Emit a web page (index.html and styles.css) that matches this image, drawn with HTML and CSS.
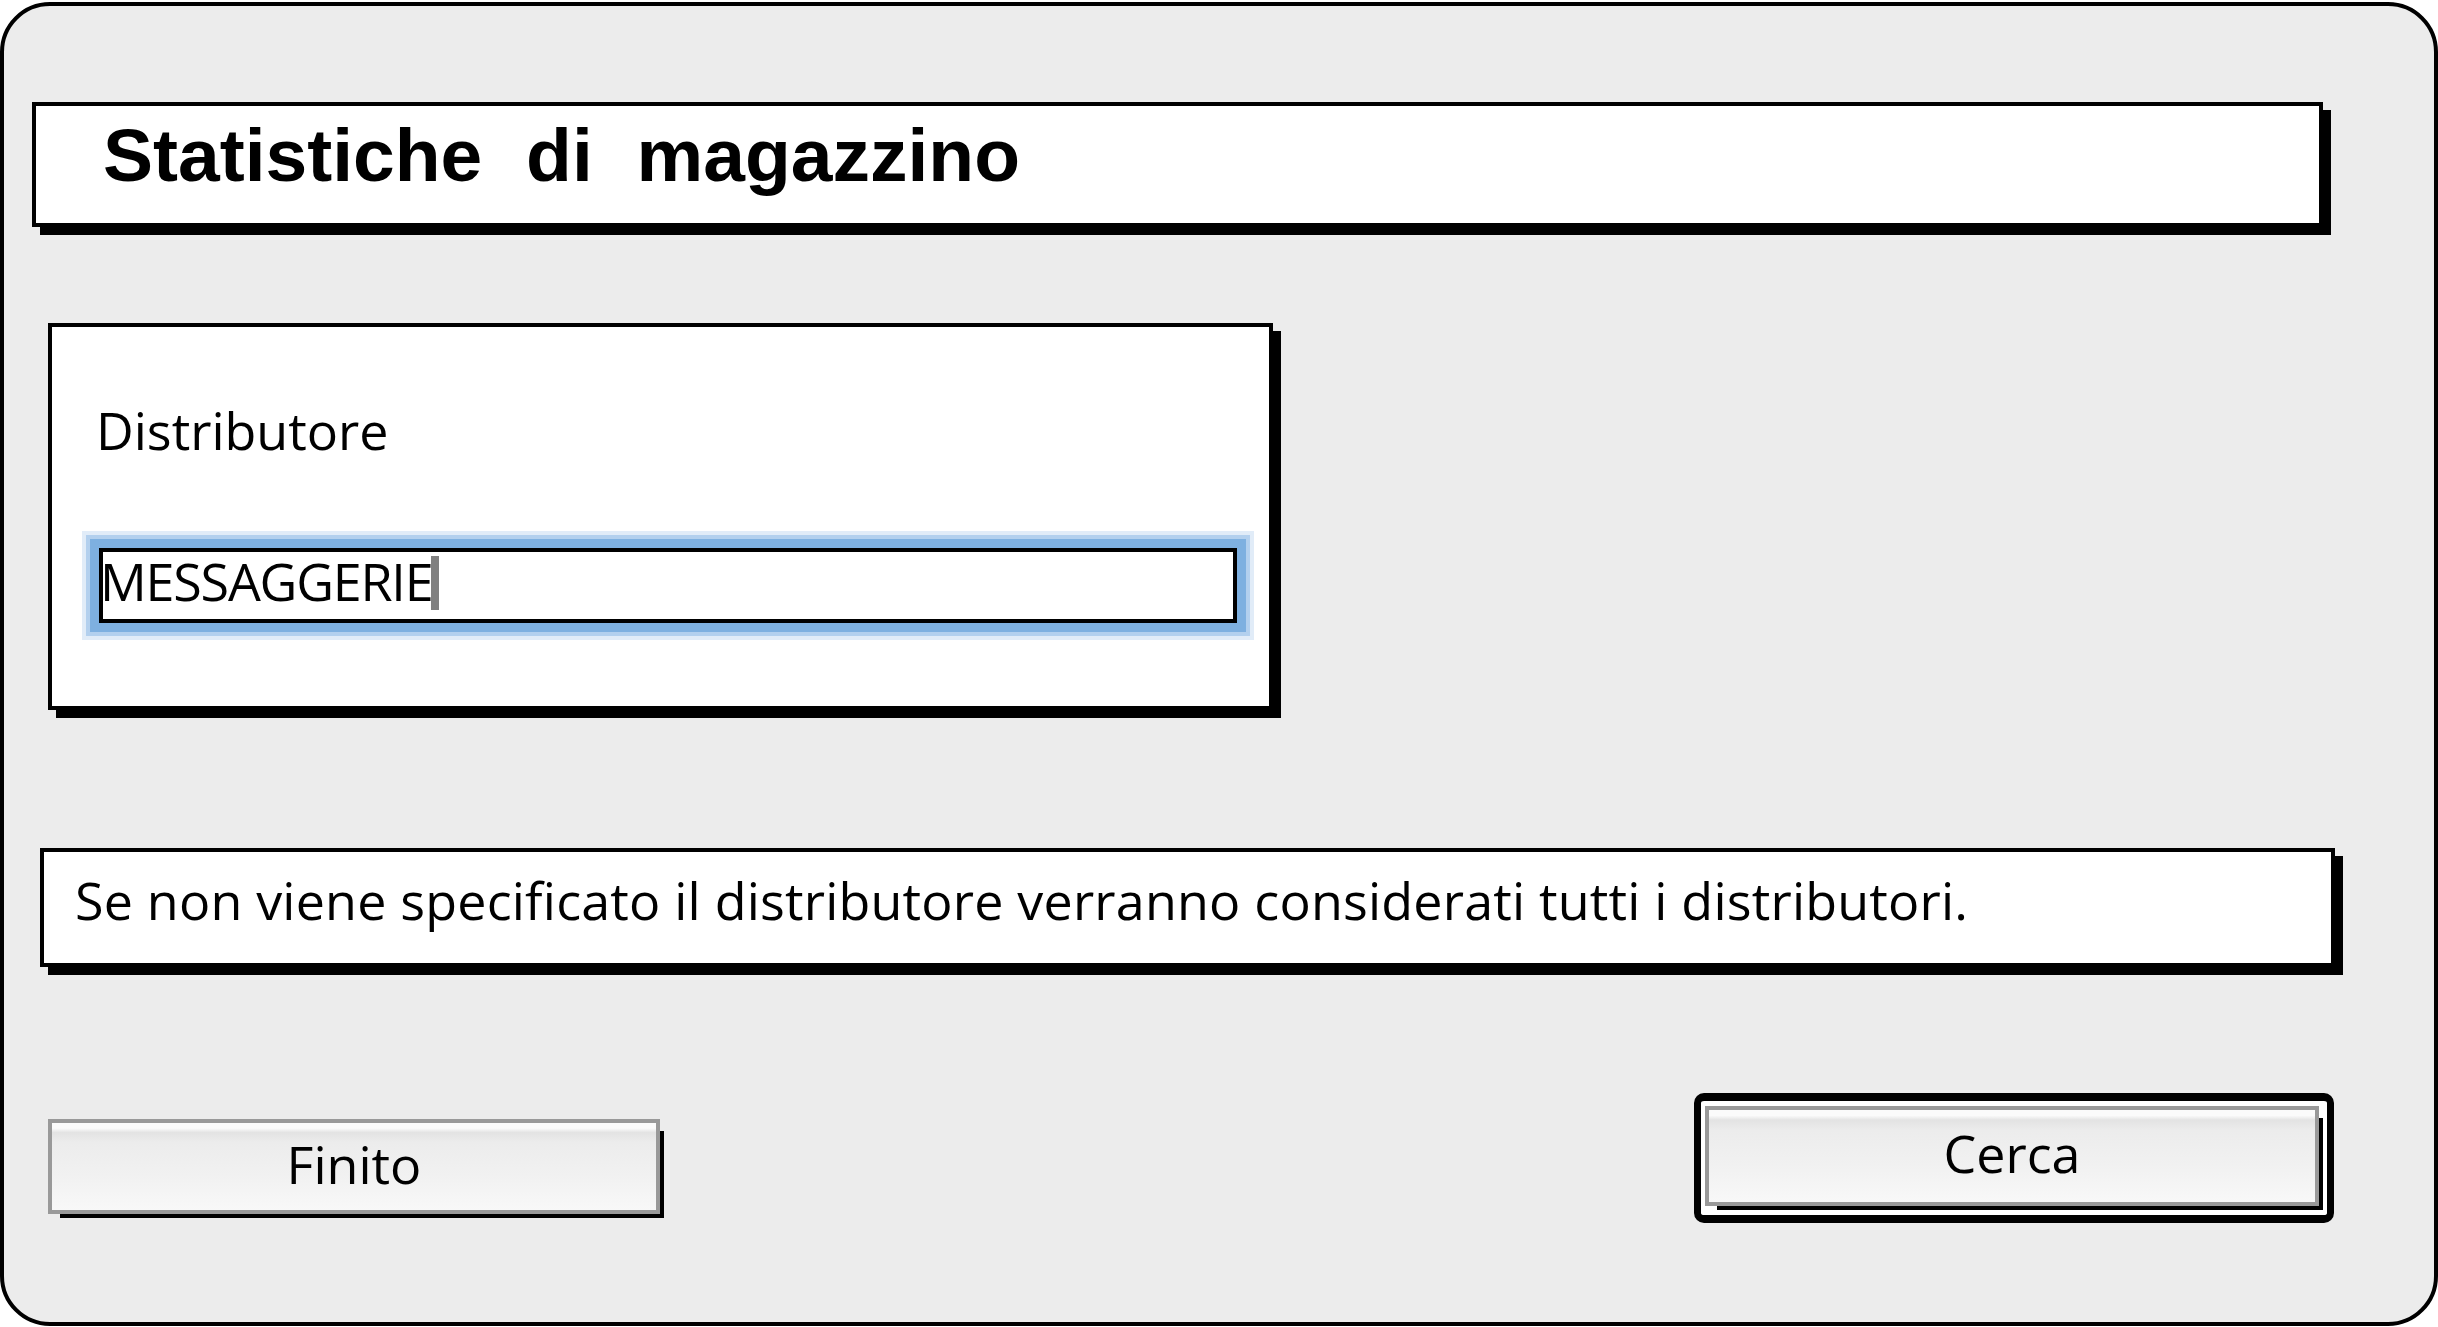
FILE: index.html
```html
<!DOCTYPE html>
<html lang="it">
<head>
<meta charset="UTF-8">
<meta name="viewport" content="width=device-width, initial-scale=1.0">
<title>Statistiche di magazzino</title>
<link rel="stylesheet" href="styles.css">
</head>
<body>
<div class="window">
    <div class="title-box">
        <h1>Statistiche di magazzino</h1>
    </div>

    <div class="filter-box">
        <div class="label">Distributore</div>
        <div class="field" role="textbox">
            <span class="field-text">MESSAGGERIE</span><span class="caret"></span>
        </div>
    </div>

    <div class="note-box">
        Se non viene specificato il distributore verranno considerati tutti i distributori.
    </div>

    <div class="buttons">
        <button class="btn finito">Finito</button>
        <div class="default-ring">
            <button class="btn">Cerca</button>
        </div>
    </div>
</div>
</body>
</html>
```

FILE: styles.css
```css
body {
    margin: 0;
    padding: 0;
    background-color: white;
    font-family: 'Open Sans', 'DejaVu Sans', sans-serif;
    color: black;
}

.window {
    box-sizing: border-box;
    width: 2438px;
    height: 1324px;
    margin-top: 2px;
    border: 4px solid black;
    border-radius: 50px;
    background-color: #ececec;
    overflow: hidden;
}

.title-box {
    box-sizing: border-box;
    width: 2291px;
    height: 125px;
    margin: 96px 0 0 28px;
    padding: 12px 0 0 67px;
    background: white;
    border: 4px solid black;
    box-shadow: 8px 8px 0 black;
}

h1 {
    margin: 0;
    font-family: 'Liberation Sans', Arial, sans-serif;
    font-weight: bold;
    font-size: 75px;
    line-height: 75px;
    word-spacing: 23px;
}

.filter-box {
    box-sizing: border-box;
    width: 1225px;
    height: 387px;
    margin: 96px 0 0 44px;
    padding: 73px 0 0 44px;
    background: white;
    border: 4px solid black;
    box-shadow: 8px 8px 0 black;
}

.label {
    font-size: 52px;
    line-height: 60px;
}

.field {
    box-sizing: border-box;
    display: flex;
    align-items: center;
    width: 1138px;
    height: 75px;
    margin: 88px 0 0 3px;
    padding: 0 0 9px 0;
    background: white;
    border: 4px solid black;
    box-shadow: 0 0 0 9px #7eb0e0, 0 0 0 13px #b3d0ee, 0 0 0 17px #e1ecf8;
}

.field-text {
    font-size: 52px;
    line-height: 56px;
    letter-spacing: -1.2px;
    margin-left: -3px;
}

.caret {
    width: 8px;
    height: 54px;
    margin: 4px 0 0 -1px;
    background: #808080;
}

.note-box {
    box-sizing: border-box;
    width: 2295px;
    height: 119px;
    margin: 138px 0 0 36px;
    padding: 18px 0 0 31px;
    background: white;
    border: 4px solid black;
    box-shadow: 8px 8px 0 black;
    font-size: 52px;
    line-height: 60px;
    letter-spacing: 0.2px;
}

.buttons {
    display: flex;
    justify-content: space-between;
    align-items: flex-start;
    margin-top: 126px;
    padding: 0 100px 0 44px;
}

.btn {
    box-sizing: border-box;
    display: block;
    width: 613px;
    height: 100px;
    padding: 0 0 6px 0;
    border: 4px solid #999;
    border-radius: 0;
    background: linear-gradient(#fbfbfb 0, #fbfbfb 6%, #e3e3e3 11%, #ececec 22%, #f1f1f1 60%, #f8f8f8 100%);
    box-shadow: 8px 8px 0 -4px black;
    font-family: 'Open Sans', 'DejaVu Sans', sans-serif;
    font-size: 52px;
    line-height: 60px;
    color: black;
}

.finito {
    width: 612px;
    height: 95px;
    margin-top: 26px;
}

.default-ring {
    padding: 5px 8px 9px 4px;
    background: white;
    border: 7px solid black;
    border-top-width: 8px;
    border-bottom-width: 8px;
    border-radius: 10px;
}

.default-ring .btn {
    width: 614px;
}
```
